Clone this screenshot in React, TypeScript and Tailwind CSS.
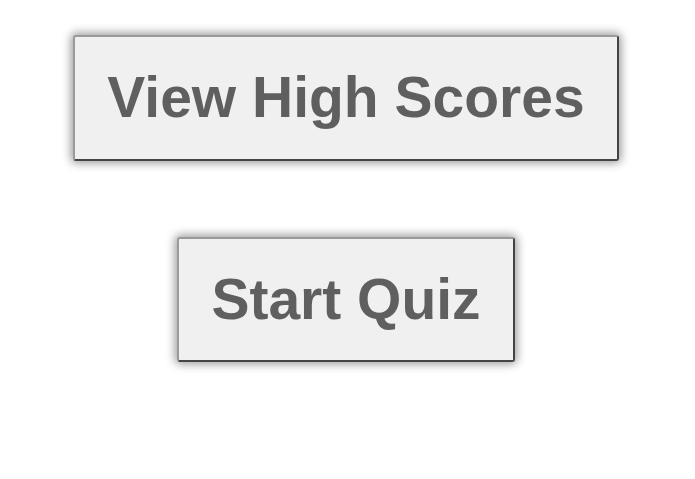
import React from 'react';

const QuizButton: React.FC<{ label: string }> = ({ label }) => {
  return (
    <button
      type="button"
      className="bg-[#f0f0f0] text-[#5f5f5f] font-bold text-[57px] leading-normal px-[32px] py-[18px] rounded-[3px] border-2 border-t-[#9a9a9a] border-l-[#9a9a9a] border-b-[#444444] border-r-[#444444] shadow-[0_0_10px_2px_rgba(0,0,0,0.4)]"
      style={{ fontFamily: '"Liberation Sans", Arial, sans-serif' }}
    >
      {label}
    </button>
  );
};

export default function App() {
  return (
    <div className="w-[692px] h-[479px] bg-white flex flex-col items-center pt-[35px] gap-[76px]">
      <QuizButton label="View High Scores" />
      <QuizButton label="Start Quiz" />
    </div>
  );
}
